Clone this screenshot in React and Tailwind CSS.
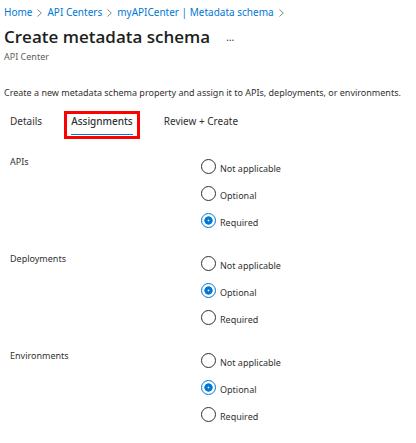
import { Fragment } from "react";

const options = ["Not applicable", "Optional", "Required"];

const groups = [
  { name: "APIs", selected: "Required" },
  { name: "Deployments", selected: "Optional" },
  { name: "Environments", selected: "Optional" },
];

const crumbs = ["Home", "API Centers", "myAPICenter | Metadata schema"];

function Chevron() {
  return (
    <svg aria-hidden="true" viewBox="0 0 5 8" className="mt-px h-2 w-[5px] shrink-0" fill="none" stroke="#8a8886">
      <path d="M0.5 0.5 L4.3 4 L0.5 7.5" />
    </svg>
  );
}

function RadioGroup({ name, selected }) {
  return (
    <fieldset className="flex">
      <legend className="float-left w-[191px] shrink-0 pt-px leading-[14px]">{name}</legend>
      <div>
        {options.map((option) => (
          <label key={option} className="flex h-[27px] items-start">
            <input
              type="radio"
              name={name}
              defaultChecked={option === selected}
              className="mt-[5px] size-[15px] shrink-0 appearance-none rounded-full border border-[#323130] bg-white checked:border-[#0078d4] checked:bg-[radial-gradient(circle,#fff_0.6px,#0078d4_1.2px,#0078d4_3.8px,#fff_4.5px)]"
            />
            <span className="ml-1 pt-2 leading-[14px]">{option}</span>
          </label>
        ))}
      </div>
    </fieldset>
  );
}

export default function App() {
  return (
    <main className="bg-white pb-4 font-['Noto_Sans','Open_Sans',sans-serif] text-[9px] text-[#323130]">
      <nav aria-label="Breadcrumb" className="flex h-6 items-center gap-[5px] pl-1 text-[10px] whitespace-nowrap text-[#0078d4]">
        {crumbs.map((crumb) => (
          <Fragment key={crumb}>
            <a href="#">{crumb}</a>
            <Chevron />
          </Fragment>
        ))}
      </nav>
      <header className="pl-1">
        <div className="flex h-[26px] items-center gap-4">
          <h1 className="font-['Open_Sans','Noto_Sans',sans-serif] text-[17px] leading-[26px] font-semibold whitespace-nowrap text-[#201f1e]">Create metadata schema</h1>
          <button type="button" aria-label="More actions" className="text-[10px] leading-[14px]">…</button>
        </div>
        <p className="leading-[14px] text-[#605e5c]">API Center</p>
      </header>
      <p className="mt-[22px] pl-1 leading-[14px] whitespace-nowrap">
        Create a new metadata schema property and assign it to APIs, deployments, or environments.
      </p>
      <div role="tablist" className="mt-[11px] flex items-start pl-[10px] text-[10px] leading-[14px]">
        <button type="button" role="tab" aria-selected="false" className="mt-[3px] mr-[22px]">Details</button>
        <button type="button" role="tab" aria-selected="true" className="mr-6 flex h-7 items-start border-3 border-[#f00] px-1 font-medium">
          <span className="block h-[21px] border-b border-[#0078d4]">Assignments</span>
        </button>
        <button type="button" role="tab" aria-selected="false" className="mt-[3px]">Review + Create</button>
      </div>
      <form className="mt-[15px] flex flex-col gap-4 pl-[10px]">
        {groups.map((group) => (
          <RadioGroup key={group.name} {...group} />
        ))}
      </form>
    </main>
  );
}
